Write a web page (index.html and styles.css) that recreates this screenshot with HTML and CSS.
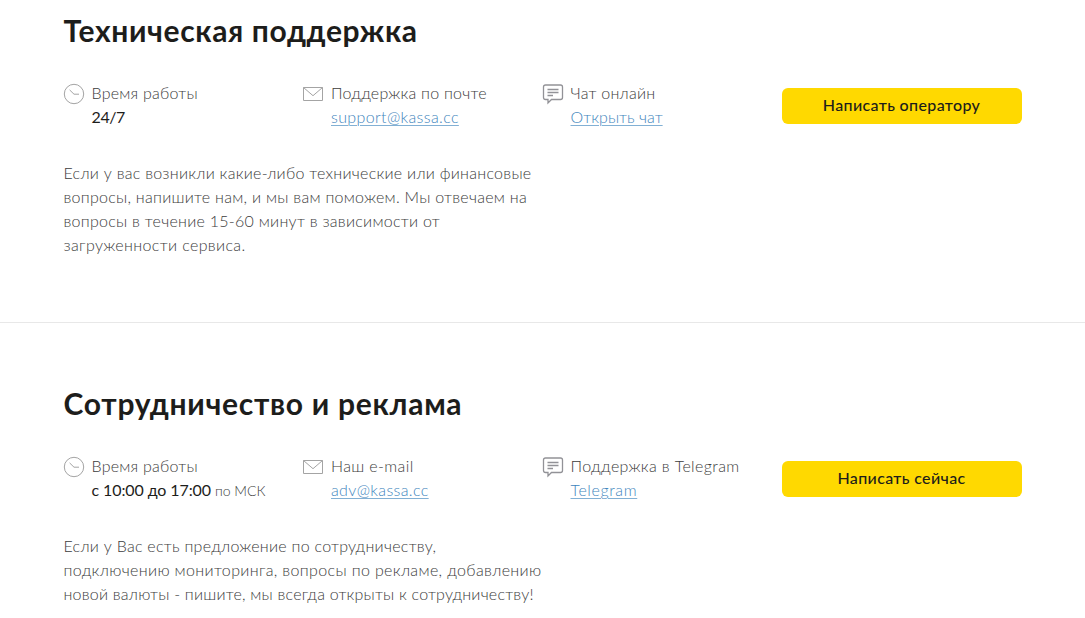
FILE: index.html
```html
<!DOCTYPE html>
<html lang="ru">
<head>
<meta charset="utf-8">
<title>Контакты</title>
<link rel="stylesheet" href="styles.css">
</head>
<body>
<svg class="sprite" aria-hidden="true">
  <symbol id="clock" viewBox="0 0 22 22"><circle cx="11" cy="11" r="9.7"/><path d="M6.600 6.900 11 11.200h5"/></symbol>
  <symbol id="mail" viewBox="0 0 22 22"><path d="M1.500 4.500h19v13h-19zM1.500 4.500 11 12.700l9.500-8.200"/></symbol>
  <symbol id="chat" viewBox="0 0 22 22"><path d="M3.500 2h15q2 0 2 2v10.500q0 2-2 2h-9L6 20v-3.500H3.500q-2 0-2-2V4q0-2 2-2zM5.500 6.500h11M5.500 9.500h11M5.500 12.500h5.500"/></symbol>
</svg>
<section class="block">
  <h2 class="title">Техническая поддержка</h2>
  <div class="contacts">
    <div class="item">
      <svg class="icon icon-clock"><use href="#clock"/></svg>
      <div><div class="label">Время работы</div><div class="value value-short">24/7</div></div>
    </div>
    <div class="item">
      <svg class="icon icon-mail"><use href="#mail"/></svg>
      <div><div class="label">Поддержка по почте</div><a class="link">support@kassa.cc</a></div>
    </div>
    <div class="item">
      <svg class="icon icon-chat"><use href="#chat"/></svg>
      <div><div class="label">Чат онлайн</div><a class="link link-tight">Открыть чат</a></div>
    </div>
    <button class="button">Написать оператору</button>
  </div>
  <p class="text">Если у вас возникли какие-либо технические или финансовые<br>вопросы, напишите нам, и мы вам поможем. Мы отвечаем на<br>вопросы в течение 15-60 минут в зависимости от<br><span class="loose">загруженности сервиса.</span></p>
</section>
<section class="block block-ads">
  <h2 class="title title-wide">Сотрудничество и реклама</h2>
  <div class="contacts">
    <div class="item">
      <svg class="icon icon-clock"><use href="#clock"/></svg>
      <div><div class="label">Время работы</div><div class="value">с 10:00 до 17:00 <small class="zone">по МСК</small></div></div>
    </div>
    <div class="item">
      <svg class="icon icon-mail"><use href="#mail"/></svg>
      <div><div class="label label-wide">Наш e-mail</div><a class="link">adv@kassa.cc</a></div>
    </div>
    <div class="item">
      <svg class="icon icon-chat"><use href="#chat"/></svg>
      <div><div class="label label-wide">Поддержка в Telegram</div><a class="link link-wide">Telegram</a></div>
    </div>
    <button class="button">Написать сейчас</button>
  </div>
  <p class="text">Если у Вас есть предложение по сотрудничеству,<br><span class="loose">подключению мониторинга, вопросы по рекламе, добавлению</span><br><span class="tight">новой валюты - пишите, мы всегда открыты к сотрудничеству!</span></p>
</section>
</body>
</html>
```
FILE: styles.css
```css
body {
  margin: 0;
  background: #fff;
  color: #1d1d1b;
  font: 300 16px/24px Lato, "Open Sans", sans-serif;
  overflow: hidden;
}
.sprite { display: none; }
.block {
  box-sizing: border-box;
  height: 323px;
  padding: 10px 63px 0 63.500px;
  border-bottom: 1px solid #e8e8e8;
}
.block-ads {
  height: auto;
  padding-top: 60px;
  border: 0;
}
.title {
  margin: 0;
  font-size: 30px;
  line-height: 40px;
  font-weight: 700;
  letter-spacing: .63px;
}
.title-wide { letter-spacing: .72px; }
.contacts {
  display: grid;
  grid-template-columns: repeat(3, 239.500px) 240px;
  height: 48px;
  margin-top: 31px;
}
.item {
  display: flex;
  gap: 7px;
  margin-left: -1px;
  white-space: nowrap;
}
.icon {
  flex: none;
  width: 22px;
  height: 22px;
  margin-top: 2px;
  fill: none;
  stroke: #a4a4a4;
  stroke-width: 1;
}
.icon-chat { stroke: #929297; stroke-width: 1.300; }
.label {
  color: #3c3c3c;
  letter-spacing: .24px;
}
.label-wide { letter-spacing: .37px; }
.value {
  font-weight: 400;
  letter-spacing: -.1px;
}
.value-short { letter-spacing: -.4px; }
.zone {
  color: #3c3c3c;
  font-size: 14px;
  font-weight: 300;
  letter-spacing: 0;
}
.link {
  color: #3f86bd;
  letter-spacing: .37px;
  text-decoration: underline #82b0d4 1px;
  text-underline-offset: 2px;
}
.link-tight { letter-spacing: .05px; }
.link-wide { letter-spacing: .62px; }
.button {
  height: 36px;
  margin: 7px 0 0;
  padding: 0 1px 2px 0;
  border: 0;
  border-radius: 6px;
  background: #ffd900;
  color: #1d1d1b;
  font: 500 16px/34px Lato, "Open Sans", sans-serif;
  letter-spacing: .36px;
}
.text {
  margin: 32px 0 0;
  color: #3c3c3c;
  letter-spacing: .27px;
  white-space: nowrap;
}
.loose { letter-spacing: .36px; }
.tight { letter-spacing: .22px; }
```
